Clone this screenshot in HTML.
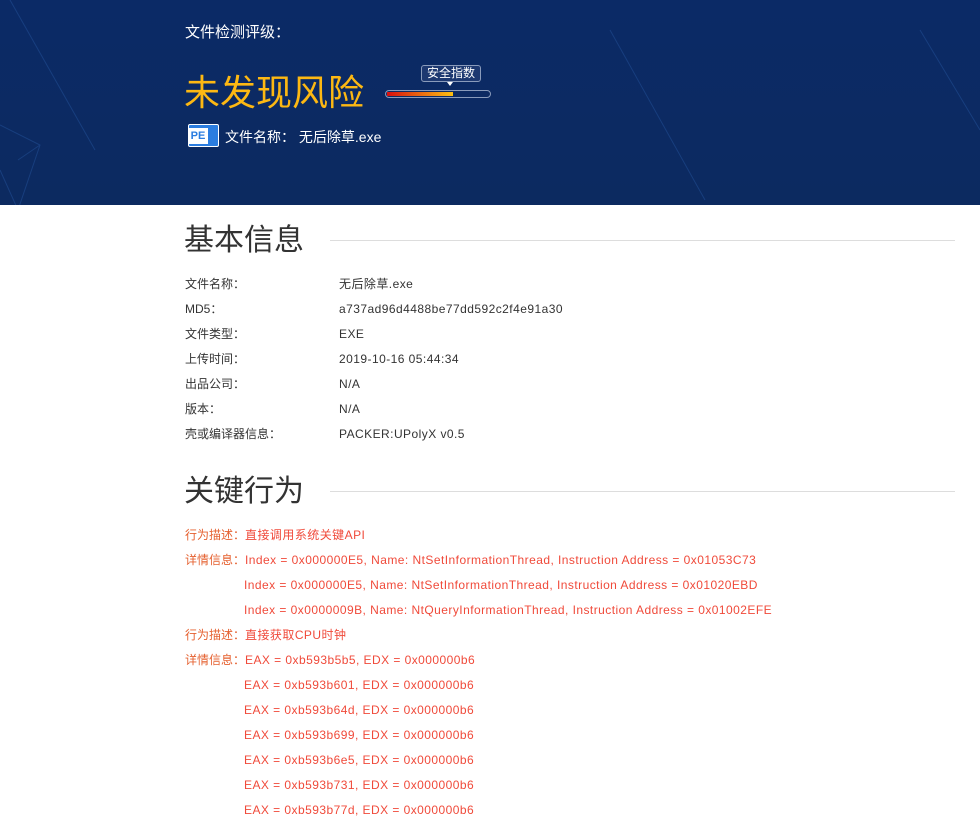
<!DOCTYPE html>
<html><head><meta charset="utf-8"><style>
*{margin:0;padding:0;box-sizing:border-box}
body{width:980px;height:822px;overflow:hidden;background:#fff;font-family:"Liberation Sans","Noto Sans CJK SC",sans-serif;color:#333;position:relative}
.hdr{position:absolute;left:0;top:0;width:980px;height:205px;background:linear-gradient(180deg,#0b2a66,#0c2a60);overflow:hidden}
.a{position:absolute;white-space:nowrap}
.row{position:absolute;font-size:12px;line-height:16px;white-space:nowrap}
.v{letter-spacing:.45px}
.h2{position:absolute;left:184px;font-size:30px;color:#333;line-height:1}
.ln{position:absolute;left:330px;width:625px;height:1px;background:#ddd}
.r{position:absolute;font-size:12px;line-height:16px;white-space:nowrap;color:#f04a3a;letter-spacing:.45px}
.lb{color:#e5602f;letter-spacing:0}
</style></head><body>
<div class="hdr">
<svg width="980" height="205" style="position:absolute;left:0;top:0">
<g stroke="#24529a" stroke-width="1" fill="none" opacity=".5">
<line x1="10" y1="0" x2="95" y2="150"/>
<line x1="610" y1="30" x2="705" y2="200"/>
<line x1="920" y1="30" x2="980" y2="130"/>
<polyline points="0,125 40,145 18,210 0,170"/>
<line x1="18" y1="160" x2="40" y2="145"/>
</g></svg>
<div class="a" style="left:185px;top:21px;font-size:15px;color:#fff">文件检测评级：</div>
<div class="a" style="left:184px;top:75px;font-size:36px;color:#fdb813;line-height:1">未发现风险</div>
<div class="a" style="left:421px;top:65px;width:60px;height:17px;border:1px solid #8a9bbb;border-radius:3px;background:#1d3870;color:#fff;font-size:12px;line-height:15px;text-align:center">安全指数</div>
<div class="a" style="left:447px;top:82px;width:0;height:0;border-left:3px solid transparent;border-right:3px solid transparent;border-top:4px solid #fff"></div>
<div class="a" style="left:385px;top:90px;width:106px;height:8px;border:1px solid #8a9bbb;border-radius:4px;background:#0d2a62"></div>
<div class="a" style="left:387px;top:92px;width:66px;height:4px;background:linear-gradient(90deg,#d80f0f,#fdc010)"></div>
<div class="a" style="left:188px;top:124px;width:31px;height:23px;background:#2b7de0;border:1px solid #fff;border-radius:2px"></div>
<div class="a" style="left:188px;top:128px;width:20px;height:16px;background:#fff;color:#2b7de0;font-size:11px;font-weight:bold;line-height:16px;text-align:center">PE</div>
<div class="a" style="left:225px;top:127px;font-size:14px;color:#fff">文件名称： 无后除草.exe</div>
</div>
<div class="h2" style="top:226px">基本信息</div><div class="ln" style="top:240px"></div>
<div class="row" style="left:185px;top:276px">文件名称：</div><div class="row v" style="left:339px;top:276px">无后除草.exe</div>
<div class="row" style="left:185px;top:301px">MD5：</div><div class="row v" style="left:339px;top:301px">a737ad96d4488be77dd592c2f4e91a30</div>
<div class="row" style="left:185px;top:326px">文件类型：</div><div class="row v" style="left:339px;top:326px">EXE</div>
<div class="row" style="left:185px;top:351px">上传时间：</div><div class="row v" style="left:339px;top:351px">2019-10-16 05:44:34</div>
<div class="row" style="left:185px;top:376px">出品公司：</div><div class="row v" style="left:339px;top:376px">N/A</div>
<div class="row" style="left:185px;top:401px">版本：</div><div class="row v" style="left:339px;top:401px">N/A</div>
<div class="row" style="left:185px;top:426px">壳或编译器信息：</div><div class="row v" style="left:339px;top:426px">PACKER:UPolyX v0.5</div>
<div class="h2" style="top:477px">关键行为</div><div class="ln" style="top:491px"></div>
<div class="r" style="left:185px;top:527px"><span class="lb">行为描述：</span>直接调用系统关键API</div>
<div class="r" style="left:185px;top:552px"><span class="lb">详情信息：</span>Index = 0x000000E5, Name: NtSetInformationThread, Instruction Address = 0x01053C73</div>
<div class="r" style="left:244px;top:577px">Index = 0x000000E5, Name: NtSetInformationThread, Instruction Address = 0x01020EBD</div>
<div class="r" style="left:244px;top:602px">Index = 0x0000009B, Name: NtQueryInformationThread, Instruction Address = 0x01002EFE</div>
<div class="r" style="left:185px;top:627px"><span class="lb">行为描述：</span>直接获取CPU时钟</div>
<div class="r" style="left:185px;top:652px"><span class="lb">详情信息：</span>EAX = 0xb593b5b5, EDX = 0x000000b6</div>
<div class="r" style="left:244px;top:677px">EAX = 0xb593b601, EDX = 0x000000b6</div>
<div class="r" style="left:244px;top:702px">EAX = 0xb593b64d, EDX = 0x000000b6</div>
<div class="r" style="left:244px;top:727px">EAX = 0xb593b699, EDX = 0x000000b6</div>
<div class="r" style="left:244px;top:752px">EAX = 0xb593b6e5, EDX = 0x000000b6</div>
<div class="r" style="left:244px;top:777px">EAX = 0xb593b731, EDX = 0x000000b6</div>
<div class="r" style="left:244px;top:802px">EAX = 0xb593b77d, EDX = 0x000000b6</div>
</body></html>
